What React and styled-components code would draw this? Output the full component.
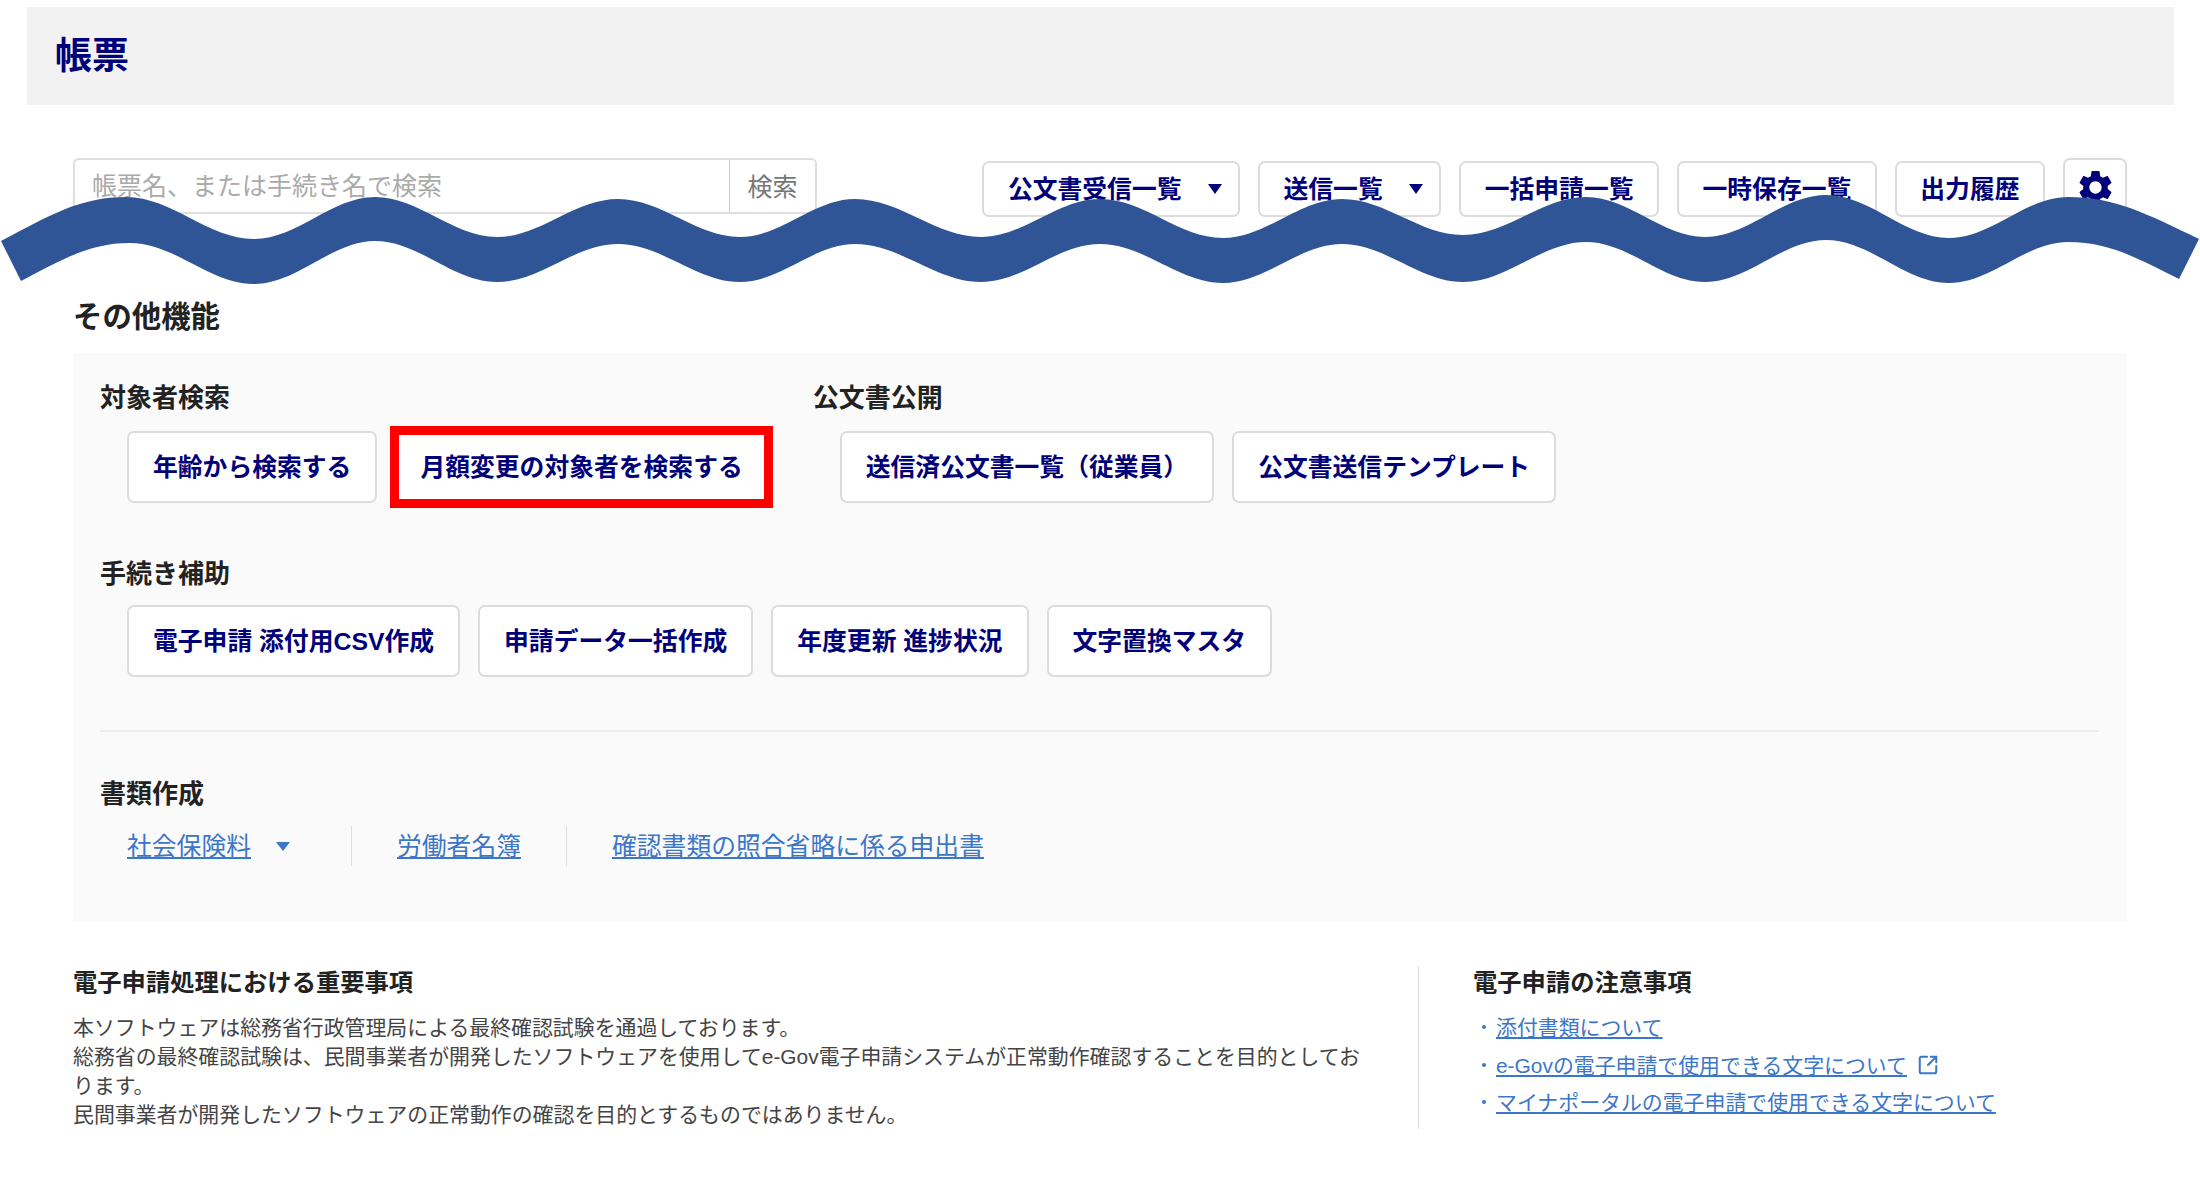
import React from "react";
import styled, { createGlobalStyle, css } from "styled-components";
import { MdSettings } from "react-icons/md";
import { SquareArrowOutUpRight } from "lucide-react";

const navy = "#00007a";
const linkBlue = "#3c76c8";

const searchButtons = ["年齢から検索する", "月額変更の対象者を検索する"];
const publishButtons = ["送信済公文書一覧（従業員）", "公文書送信テンプレート"];
const supportButtons = ["電子申請 添付用CSV作成", "申請データ一括作成", "年度更新 進捗状況", "文字置換マスタ"];

const waveTop = [
  [1, 241], [126, 197], [254, 239], [375, 197], [497, 237], [618, 199], [740, 237], [855, 199],
  [981, 237], [1100, 199], [1223, 238], [1342, 199], [1463, 235], [1586, 197], [1705, 237],
  [1826, 195], [1949, 238], [2068, 197], [2199, 239],
];
const waveBottom = [
  [21, 281], [130, 243], [254, 284], [375, 241], [497, 282], [618, 244], [740, 282], [855, 244],
  [981, 282], [1100, 244], [1223, 283], [1342, 244], [1463, 282], [1586, 242], [1705, 282],
  [1826, 240], [1949, 283], [2068, 242], [2179, 279],
];

// crests and troughs joined with flat tangents, the two ends run in on a slope
const curve = (points) => {
  let d = "";
  for (let i = 1; i < points.length; i++) {
    const [x0, y0] = points[i - 1];
    const [x1, y1] = points[i];
    const dx = x1 - x0;
    const c1 = i === 1 ? [x0 + dx * 0.4, y0 + (y1 - y0) * 0.6] : [x0 + dx * 0.36, y0];
    const c2 = i === points.length - 1 ? [x1 - dx * 0.4, y1 - (y1 - y0) * 0.6] : [x1 - dx * 0.36, y1];
    d += ` C${c1[0]} ${c1[1]} ${c2[0]} ${c2[1]} ${x1} ${y1}`;
  }
  return d;
};

const wavePath = () => {
  const back = [...waveBottom].reverse();
  return `M${waveTop[0].join(" ")}${curve(waveTop)} L${back[0].join(" ")}${curve(back)} Z`;
};

const App = () => {
  return (
    <Page>
      <GlobalStyle />
      <Header>
        <Title>帳票</Title>
      </Header>

      <Content>
        <Toolbar>
          <SearchBox>
            <SearchInput placeholder="帳票名、または手続き名で検索" />
            <SearchButton>検索</SearchButton>
          </SearchBox>
          <Actions>
            <ActionButton>
              公文書受信一覧
              <Caret />
            </ActionButton>
            <ActionButton>
              送信一覧
              <Caret />
            </ActionButton>
            <ActionButton>一括申請一覧</ActionButton>
            <ActionButton>一時保存一覧</ActionButton>
            <ActionButton>出力履歴</ActionButton>
            <GearButton>
              <MdSettings size={41} />
            </GearButton>
          </Actions>
        </Toolbar>

        <SectionTitle>その他機能</SectionTitle>
        <Panel>
          <GroupRow>
            <Group>
              <GroupLabel>対象者検索</GroupLabel>
              <ButtonRow>
                {searchButtons.map((label, i) => (
                  <PanelButton key={label} $highlight={i === 1}>
                    {label}
                  </PanelButton>
                ))}
              </ButtonRow>
            </Group>
            <Group>
              <GroupLabel>公文書公開</GroupLabel>
              <ButtonRow>
                {publishButtons.map((label) => (
                  <PanelButton key={label}>{label}</PanelButton>
                ))}
              </ButtonRow>
            </Group>
          </GroupRow>

          <SupportGroup>
            <GroupLabel>手続き補助</GroupLabel>
            <ButtonRow>
              {supportButtons.map((label) => (
                <PanelButton key={label}>{label}</PanelButton>
              ))}
            </ButtonRow>
          </SupportGroup>

          <Rule />

          <GroupLabel>書類作成</GroupLabel>
          <LinkRow>
            <DocLink>
              <a href="#hoken">社会保険料</a>
              <LinkCaret />
            </DocLink>
            <DocLink>
              <a href="#meibo">労働者名簿</a>
            </DocLink>
            <DocLink>
              <a href="#shogo">確認書類の照合省略に係る申出書</a>
            </DocLink>
          </LinkRow>
        </Panel>

        <Notes>
          <NoteMain>
            <NoteTitle>電子申請処理における重要事項</NoteTitle>
            <NoteBody>
              本ソフトウェアは総務省行政管理局による最終確認試験を通過しております。
              <br />
              総務省の最終確認試験は、民間事業者が開発したソフトウェアを使用してe-Gov電子申請システムが正常動作確認することを目的としております。
              <br />
              民間事業者が開発したソフトウェアの正常動作の確認を目的とするものではありません。
            </NoteBody>
          </NoteMain>
          <NoteSide>
            <NoteTitle>電子申請の注意事項</NoteTitle>
            <NoteLinks>
              <li>
                <a href="#tenpu">添付書類について</a>
              </li>
              <li>
                <a href="#egov">e-Govの電子申請で使用できる文字について</a>
                <SquareArrowOutUpRight size={22} strokeWidth={2.2} />
              </li>
              <li>
                <a href="#myna">マイナポータルの電子申請で使用できる文字について</a>
              </li>
            </NoteLinks>
          </NoteSide>
        </Notes>
      </Content>

      <Wave viewBox="0 0 2200 300" aria-hidden="true">
        <path d={wavePath()} fill="#2f5597" />
      </Wave>
    </Page>
  );
};

export default App;

const GlobalStyle = createGlobalStyle`
  body {
    margin: 0;
    background: #fff;
    font-family: "Liberation Sans", "Noto Sans CJK JP", sans-serif;
  }
  * {
    box-sizing: border-box;
  }
`;

const Page = styled.div`
  position: relative;
  min-height: 1184px;
  padding-top: 7px;
`;

const Wave = styled.svg`
  position: absolute;
  top: 0;
  left: 0;
  width: 2200px;
  height: 300px;
  pointer-events: none;
`;

const Header = styled.header`
  display: flex;
  align-items: center;
  height: 98px;
  margin: 0 26px 0 27px;
  padding: 0 0 6px 28px;
  background: #f2f2f2;
`;

const Title = styled.h1`
  margin: 0;
  color: ${navy};
  font-size: 37px;
  font-weight: 700;
`;

const Content = styled.main`
  padding: 53px 73px 0 73px;
`;

const Toolbar = styled.div`
  display: flex;
  justify-content: space-between;
  align-items: flex-start;
`;

const SearchBox = styled.div`
  display: flex;
  width: 744px;
  height: 56px;
  border: 2px solid #dedede;
  border-radius: 6px;
  background: #fff;
`;

const SearchInput = styled.input`
  flex: 1;
  min-width: 0;
  padding: 0 17px;
  border: none;
  outline: none;
  background: transparent;
  font-family: inherit;
  font-size: 25px;

  &::placeholder {
    color: #aaaaaa;
  }
`;

const SearchButton = styled.button`
  width: 86px;
  padding: 0 0 2px;
  border: none;
  border-left: 1px solid #c8c8c8;
  background: transparent;
  color: #777;
  font-family: inherit;
  font-size: 25px;
`;

const Actions = styled.div`
  display: flex;
  align-items: flex-end;
  gap: 18px;
`;

const buttonBase = css`
  display: flex;
  align-items: center;
  justify-content: center;
  border: 2px solid #dcdcdc;
  border-radius: 7px;
  background: #fff;
  color: ${navy};
  font-family: inherit;
  font-size: 24.8px;
  font-weight: 700;
  white-space: nowrap;
`;

const ActionButton = styled.button`
  ${buttonBase}
  height: 56px;
  padding: 0 23.5px 4px;
`;

const Caret = styled.span`
  width: 0;
  height: 0;
  margin: 4px -7px 0 26px;
  border-top: 10px solid ${navy};
  border-left: 7px solid transparent;
  border-right: 7px solid transparent;
`;

const GearButton = styled.button`
  ${buttonBase}
  width: 64px;
  height: 59px;
  padding: 0;
`;

const SectionTitle = styled.h2`
  margin: 80px 0 16px;
  color: #222;
  font-size: 29.4px;
  font-weight: 700;
  line-height: 40px;
`;

const Panel = styled.section`
  padding: 30px 28px 56px 27px;
  background: #fafafa;
`;

const GroupRow = styled.div`
  display: flex;
  gap: 45px;
`;

const Group = styled.div`
  display: flex;
  flex-direction: column;
`;

const GroupLabel = styled.div`
  color: #222;
  font-size: 26px;
  font-weight: 700;
  line-height: 30px;
`;

const ButtonRow = styled.div`
  display: flex;
  gap: 18px;
  margin: 18px 0 0 27px;
`;

const SupportGroup = styled(Group)`
  margin-top: 56px;

  ${ButtonRow} {
    margin-top: 16px;
  }
`;

const PanelButton = styled.button`
  ${buttonBase}
  height: 72px;
  padding: 0 24px 4px;
  ${(props) =>
    props.$highlight &&
    css`
      padding: 0 23px 4px;
      outline: 9px solid #ff0000;
      outline-offset: -4px;
      border-radius: 0;
    `}
`;

const Rule = styled.hr`
  height: 2px;
  margin: 53px 0 47px;
  border: none;
  background: #ececec;
`;

const LinkRow = styled.div`
  display: flex;
  height: 40px;
  margin: 17px 0 0 27px;
`;

const DocLink = styled.div`
  display: flex;
  align-items: center;
  padding-bottom: 4px;
  font-size: 24.8px;

  & + & {
    margin-left: 45px;
  }

  &:not(:last-child) {
    padding-right: 45px;
    border-right: 1px solid #dddddd;
  }

  a {
    color: ${linkBlue};
  }
`;

const LinkCaret = styled.span`
  width: 0;
  height: 0;
  margin: 4px 16px 0 25px;
  border-top: 9px solid ${linkBlue};
  border-left: 7px solid transparent;
  border-right: 7px solid transparent;
`;

const Notes = styled.section`
  display: flex;
  margin-top: 44px;
`;

const NoteMain = styled.div`
  width: 1345px;
  padding-right: 45px;
`;

const NoteSide = styled.div`
  flex: 1;
  padding-left: 54px;
  border-left: 1px solid #dddddd;
`;

const NoteTitle = styled.h3`
  margin: 0 0 13px;
  color: #222;
  font-size: 24.3px;
  font-weight: 700;
  line-height: 34px;
`;

const NoteBody = styled.p`
  margin: 0;
  color: #444;
  font-size: 20.9px;
  line-height: 29px;
`;

const NoteLinks = styled.ul`
  display: flex;
  flex-direction: column;
  gap: 8.5px;
  margin: 0;
  padding: 0 0 0 23px;
  list-style: none;
  font-size: 20.9px;
  line-height: 29px;

  li {
    position: relative;
    display: flex;
    align-items: center;
    gap: 10px;
    color: ${linkBlue};
  }

  li::before {
    content: "";
    position: absolute;
    left: -14px;
    top: 12px;
    width: 4px;
    height: 4px;
    border-radius: 50%;
    background: ${linkBlue};
  }

  a {
    color: ${linkBlue};
  }
`;
